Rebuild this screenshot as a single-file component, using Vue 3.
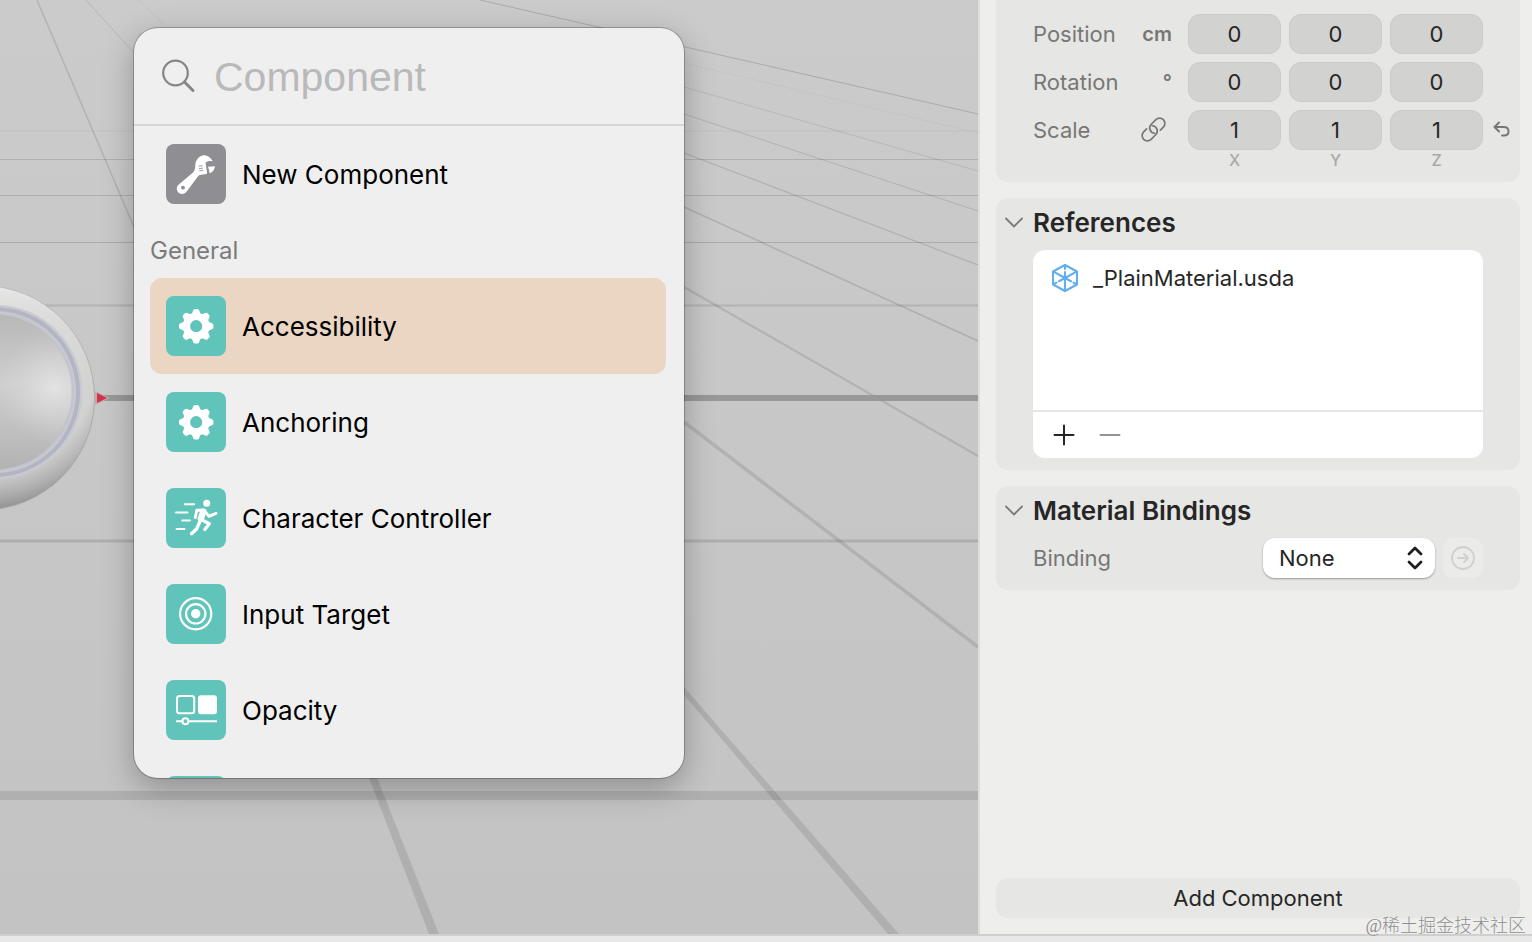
<script setup>
import { ref } from 'vue'

const query = ref('')
const selected = ref('Accessibility')
const binding = ref('None')

const general = [
  { name: 'Accessibility', icon: 'gear' },
  { name: 'Anchoring', icon: 'gear' },
  { name: 'Character Controller', icon: 'runner' },
  { name: 'Input Target', icon: 'target' },
  { name: 'Opacity', icon: 'opacity' },
]

const transform = ref([
  { label: 'Position', unit: 'cm', values: ['0', '0', '0'] },
  { label: 'Rotation', unit: '°', values: ['0', '0', '0'] },
  { label: 'Scale', unit: '', values: ['1', '1', '1'] },
])
const axes = ['X', 'Y', 'Z']

const teeth = [0, 45, 90, 135, 180, 225, 270, 315]

const depthLines = [
  { y: 131, w: 1, o: 0.05 },
  { y: 159.5, w: 1, o: 0.12 },
  { y: 195.5, w: 1, o: 0.13 },
  { y: 242.5, w: 1, o: 0.15 },
  { y: 305.5, w: 2, o: 0.1 },
  { y: 541, w: 3, o: 0.12 },
  { y: 795.5, w: 9, o: 0.1 },
]
const rays = [
  { d: 'M37 0L134 227', w: 1.5, o: 0.12 },
  { d: 'M86 0L134 53', w: 1, o: 0.1 },
  { d: 'M138 0L166 26', w: 1, o: 0.04 },
  { d: 'M480 0L978 114', w: 1, o: 0.16 },
  { d: 'M684 63L978 133', w: 1, o: 0.03 },
  { d: 'M684 87L978 171', w: 1, o: 0.09 },
  { d: 'M684 114L978 211', w: 1, o: 0.12 },
  { d: 'M684 153L978 265', w: 1.2, o: 0.13 },
  { d: 'M684 207L978 341', w: 1.6, o: 0.12 },
  { d: 'M684 287L978 456', w: 2.2, o: 0.11 },
  { d: 'M684 422L978 647', w: 3.5, o: 0.1 },
]
</script>

<template>
  <div class="app">
    <div class="workspace">
      <main class="viewport">
        <svg class="scene" viewBox="0 0 978 934" preserveAspectRatio="xMinYMin slice" aria-hidden="true">
          <defs>
            <linearGradient id="floor" x1="0" y1="0" x2="0" y2="1">
              <stop offset="0" stop-color="#cbcbcb" />
              <stop offset="1" stop-color="#c3c3c3" />
            </linearGradient>
            <radialGradient id="rim" gradientUnits="userSpaceOnUse" cx="-14" cy="360" r="160">
              <stop offset="0.5" stop-color="#d6d6d5" />
              <stop offset="0.7" stop-color="#d2d2d1" />
              <stop offset="0.84" stop-color="#b0b0b0" />
              <stop offset="1" stop-color="#7d7d7d" />
            </radialGradient>
            <linearGradient id="rimTop" x1="0" y1="0" x2="0" y2="1">
              <stop offset="0" stop-color="#e6e6e6" />
              <stop offset="0.2" stop-color="#dededd" stop-opacity="0.4" />
              <stop offset="0.45" stop-color="#dededd" stop-opacity="0" />
            </linearGradient>
            <linearGradient id="face" x1="0" y1="0" x2="0" y2="1">
              <stop offset="0" stop-color="#b6b7b6" />
              <stop offset="0.45" stop-color="#cfcfcf" />
              <stop offset="1" stop-color="#b2b2b2" />
            </linearGradient>
            <radialGradient id="glow" gradientUnits="userSpaceOnUse" cx="54" cy="388" r="56">
              <stop offset="0" stop-color="#e2e3e2" />
              <stop offset="1" stop-color="#d4d4d4" stop-opacity="0" />
            </radialGradient>
          </defs>
          <rect width="978" height="934" fill="url(#floor)" />
          <path
            v-for="line in depthLines"
            :key="line.y"
            :d="`M0 ${line.y}H978`"
            stroke="#000"
            :stroke-width="line.w"
            :stroke-opacity="line.o"
          />
          <path
            v-for="ray in rays"
            :key="ray.d"
            :d="ray.d"
            stroke="#000"
            :stroke-width="ray.w"
            :stroke-opacity="ray.o"
          />
          <path d="M366 770L429 934H439L374 770Z" fill="#000" fill-opacity="0.1" />
          <path d="M684 695L888 934H899L684 687Z" fill="#000" fill-opacity="0.1" />
          <path d="M104 398H978" stroke="#989898" stroke-width="6" />
          <circle cx="-17.5" cy="398" r="112" fill="url(#rim)" stroke="#a4a4a4" stroke-width="0.8" />
          <circle cx="-17.5" cy="398" r="112" fill="url(#rimTop)" />
          <circle cx="-4.5" cy="392" r="87" fill="#c9cad0" />
          <circle cx="-5" cy="392" r="83" fill="none" stroke="#b3b5c4" stroke-width="4" />
          <circle cx="-5.5" cy="392" r="78.5" fill="url(#face)" stroke="#c3c4cc" stroke-width="2" />
          <circle cx="-5.5" cy="392" r="77" fill="url(#glow)" />
          <path d="M95 391L110 398L95 405Z" fill="#c5a8aa" />
          <path d="M97 393L107 398L97 403Z" fill="#d4324a" />
        </svg>

        <section class="picker" aria-label="Add component">
          <label class="search">
            <svg class="search-icon" viewBox="0 0 34 34" aria-hidden="true">
              <circle cx="13.500" cy="14" r="12.300" fill="none" stroke="#868686" stroke-width="2.200" />
              <path d="M22.500 23L31 31.500" stroke="#868686" stroke-width="3" stroke-linecap="round" />
            </svg>
            <input v-model="query" type="text" placeholder="Component" aria-label="Search components" />
          </label>

          <div class="choices">
            <button class="choice" type="button">
              <svg class="tile gray" viewBox="0 0 60 60" aria-hidden="true">
                <path
                  d="M46.8 17.2C44.5 12.800 40.500 10.700 37.500 11.200C32.500 12 29.500 16.500 29.300 21C29.200 24.500 28.800 26.500 27 28.500L12.500 40.800C9.800 43.500 10.500 47.300 13 49C15.800 50.800 19 50 20.700 47.500L31.500 33C32.800 31.300 34.500 30.600 36.800 30.600C38.500 30.600 40 30.200 41.200 29.500L39.500 18.500Q42.500 16.500 46.800 17.200Z"
                  fill="#fff"
                />
                <path d="M42 22.800L49 22.300Q48.500 27 43.800 29.500Z" fill="#fff" />
                <path d="M40.600 19.500L42.800 30" stroke="#8e8e93" stroke-width="1" />
                <path d="M32.800 22.300L36.500 21.600M33 24.700L37 24M33.200 27L37.200 26.300" stroke="#8e8e93" stroke-width="0.9" />
                <circle cx="17" cy="43.700" r="1.900" fill="#8e8e93" />
              </svg>
              <span>New Component</span>
            </button>

            <h2 class="group">General</h2>

            <button
              v-for="item in general"
              :key="item.name"
              class="choice"
              :class="{ active: item.name === selected }"
              type="button"
              @click="selected = item.name"
            >
              <svg class="tile teal" viewBox="0 0 60 60" aria-hidden="true">
                <g v-if="item.icon === 'gear'" fill="#fff">
                  <path
                    v-for="angle in teeth"
                    :key="angle"
                    d="M25.200 19.500L27.200 14.500Q27.700 13 29 13H31.400Q32.700 13 33.200 14.500L35.200 19.500Z"
                    :transform="`rotate(${angle} 30.200 30.200)`"
                  />
                  <circle cx="30.200" cy="30.200" r="9.800" fill="none" stroke="#fff" stroke-width="7.400" />
                </g>
                <g v-else-if="item.icon === 'runner'" fill="none" stroke="#fff" stroke-linecap="round" stroke-linejoin="round">
                  <circle cx="40.700" cy="15.300" r="3.500" fill="#fff" stroke="none" />
                  <path d="M18.800 16.300H28.200M10 24.500H21.500M16.300 32.500H24M10.500 41H18.500" stroke-width="1.900" />
                  <path d="M29.300 29.500L30.800 22.200L37 22.300M40 24.800L43 28.300L50 25.300" stroke-width="2.900" />
                  <path d="M37.300 23.500L34.800 30.800" stroke-width="6.400" />
                  <path d="M35.300 31.500L43.300 35.800L38.800 41.500M33.500 34.500L30.500 41L25.500 45.700" stroke-width="3.300" />
                </g>
                <g v-else-if="item.icon === 'target'" fill="none" stroke="#fff" stroke-width="2.200">
                  <circle cx="29.700" cy="29.800" r="15.600" />
                  <circle cx="29.700" cy="29.800" r="9.700" />
                  <circle cx="29.700" cy="29.800" r="4.700" fill="#fff" stroke="none" />
                </g>
                <g v-else fill="none" stroke="#fff" stroke-width="2">
                  <rect x="11" y="16" width="17.200" height="17.200" rx="2.500" />
                  <rect x="32" y="15.200" width="19" height="19" rx="3" fill="#fff" stroke="none" />
                  <path d="M10.800 41.200H16.400M22.400 41.200H50.200" stroke-linecap="round" />
                  <circle cx="19.400" cy="41.200" r="3" />
                </g>
              </svg>
              <span>{{ item.name }}</span>
            </button>
            <button class="choice" type="button" aria-label="More components">
              <svg class="tile teal" viewBox="0 0 60 60" aria-hidden="true" />
            </button>
          </div>
        </section>
      </main>

      <aside class="inspector">
        <section class="card transform" aria-label="Transform">
          <div v-for="row in transform" :key="row.label" class="vector">
            <span class="label">{{ row.label }}</span>
            <span v-if="row.unit" class="unit">{{ row.unit }}</span>
            <button v-else class="plain unit" type="button" aria-label="Link scale axes">
              <svg width="32" height="28" viewBox="0 0 32 28" fill="none" stroke="#777775" stroke-width="1.700" stroke-linecap="round" aria-hidden="true">
                <g transform="translate(13.5 13.5) rotate(-45)">
                  <path d="M4.500 5.250H8.650A5.250 5.250 0 0 0 8.650 -5.250H2.150A5.250 5.250 0 0 0 -1.800 3.500" />
                  <path d="M-4.500 -5.250H-8.650A5.250 5.250 0 0 0 -8.650 5.250H-2.150A5.250 5.250 0 0 0 1.800 -3.500" />
                </g>
              </svg>
            </button>
            <input
              v-for="(axis, i) in axes"
              :key="axis"
              v-model="row.values[i]"
              class="field"
              type="text"
              :aria-label="`${row.label} ${axis}`"
            />
            <button v-if="row.label === 'Scale'" class="plain" type="button" aria-label="Reset scale">
              <svg width="22" height="24" viewBox="0 0 22 24" fill="none" stroke="#777775" stroke-width="2" stroke-linecap="round" stroke-linejoin="round" aria-hidden="true">
                <path d="M8 4.500L3.500 9L8 13.500M4 9H12.500C15.500 9 17.500 10.600 17.500 13.200C17.500 15.900 15.500 17.500 13 17.500H11" />
              </svg>
            </button>
          </div>
          <div class="vector axes">
            <span v-for="axis in axes" :key="axis" class="axis">{{ axis }}</span>
          </div>
        </section>

        <section class="card">
          <h2 class="head">
            <svg width="18" height="12" viewBox="0 0 18 12" fill="none" stroke="#7b7b79" stroke-width="1.800" stroke-linecap="round" stroke-linejoin="round" aria-hidden="true">
              <path d="M1 1.500L9 9.500L17 1.500" />
            </svg>
            References
          </h2>
          <div class="refs">
            <ul>
              <li>
                <svg width="28" height="30" viewBox="0 0 28 30" fill="none" stroke="#62aeee" stroke-width="2.100" stroke-linejoin="round" stroke-linecap="round" aria-hidden="true">
                  <path d="M14 2L26 8.500V21.500L14 28L2 21.500V8.500Z" />
                  <path d="M2.500 8.700L14 15L25.500 8.700M14 15V28" />
                  <path d="M14 3V6M14 9V14M3 21L5.500 19.600M8 18.200L14 15L20 18.200M22.500 19.600L25 21" />
                </svg>
                <span>_PlainMaterial.usda</span>
              </li>
            </ul>
            <div class="tools">
              <button class="plain" type="button" aria-label="Add reference">
                <svg width="22" height="22" viewBox="0 0 22 22" stroke="#262626" stroke-width="2" stroke-linecap="round" aria-hidden="true">
                  <path d="M1.500 11H20.500M11 1.500V20.500" />
                </svg>
              </button>
              <button class="plain" type="button" aria-label="Remove reference">
                <svg width="22" height="22" viewBox="0 0 22 22" stroke="#949494" stroke-width="2" stroke-linecap="round" aria-hidden="true">
                  <path d="M1.500 11H20.500" />
                </svg>
              </button>
            </div>
          </div>
        </section>

        <section class="card">
          <h2 class="head">
            <svg width="18" height="12" viewBox="0 0 18 12" fill="none" stroke="#7b7b79" stroke-width="1.800" stroke-linecap="round" stroke-linejoin="round" aria-hidden="true">
              <path d="M1 1.500L9 9.500L17 1.500" />
            </svg>
            Material Bindings
          </h2>
          <div class="binding">
            <label class="label" for="binding">Binding</label>
            <div class="select">
              <select id="binding" v-model="binding">
                <option>None</option>
              </select>
              <svg width="16" height="24" viewBox="0 0 16 24" fill="none" stroke="#1f1f1f" stroke-width="2.800" stroke-linecap="round" stroke-linejoin="round" aria-hidden="true">
                <path d="M2 8L8 2L14 8M2 16L8 22L14 16" />
              </svg>
            </div>
            <button class="go" type="button" disabled aria-label="Go to material">
              <svg width="24" height="24" viewBox="0 0 24 24" fill="none" stroke="#d0d0ce" stroke-width="1.800" stroke-linecap="round" stroke-linejoin="round" aria-hidden="true">
                <circle cx="12" cy="12" r="11" />
                <path d="M7 12H17M13 8L17 12L13 16" />
              </svg>
            </button>
          </div>
        </section>

        <button class="add" type="button">Add Component</button>
      </aside>
    </div>
    <footer class="strip"></footer>
    <span class="watermark">@稀土掘金技术社区</span>
  </div>
</template>

<style>
body {
  margin: 0;
}
</style>

<style scoped>
.app {
  position: relative;
  display: flex;
  flex-direction: column;
  height: 100vh;
  overflow: hidden;
  background: #eeeeec;
  color: #262626;
  font-family: Inter, "Liberation Sans", "Noto Sans CJK SC", sans-serif;
  font-size: 22px;
}
.app * {
  box-sizing: border-box;
}
button,
input,
select {
  margin: 0;
  padding: 0;
  border: 0;
  background: none;
  color: inherit;
  font: inherit;
}
h2,
ul {
  margin: 0;
  padding: 0;
  list-style: none;
}
svg {
  display: block;
  flex: none;
}
.workspace {
  display: flex;
  flex: 1;
  min-height: 0;
}
.viewport {
  position: relative;
  flex: 1;
  min-width: 0;
  overflow: hidden;
  background: #c6c6c6;
}
.scene {
  width: 100%;
  height: 100%;
}
.picker {
  position: absolute;
  top: 28px;
  left: 134px;
  display: flex;
  flex-direction: column;
  width: 550px;
  height: 750px;
  overflow: hidden;
  border-radius: 24px;
  background: #efefef;
  box-shadow: 0 0 0 1px rgba(0, 0, 0, 0.24), 0 10px 32px rgba(0, 0, 0, 0.28);
}
.search {
  display: flex;
  flex: none;
  align-items: center;
  gap: 18px;
  height: 98px;
  padding: 0 28px;
  border-bottom: 2px solid #d6d6d6;
}
.search-icon {
  width: 34px;
  height: 34px;
}
.search input {
  flex: 1;
  min-width: 0;
  padding-top: 3px;
  outline: none;
  font-family: "Liberation Sans", sans-serif;
  font-size: 41px;
}
.search input::placeholder {
  color: #b9b9b9;
  opacity: 1;
}
.choices {
  flex: 1;
  min-height: 0;
  overflow: hidden;
  padding: 0 18px 0 16px;
}
.choice {
  display: flex;
  align-items: center;
  gap: 16px;
  width: 100%;
  height: 96px;
  padding: 0 16px;
  border-radius: 12px;
  color: #000;
  font-size: 26px;
  text-align: left;
}
.choice.active {
  background: #ebd6c3;
}
.tile {
  width: 60px;
  height: 60px;
  border-radius: 8px;
}
.gray {
  background: #8e8e93;
}
.teal {
  background: #61c4bb;
}
.group {
  height: 56px;
  color: #7b7b7b;
  font-size: 24px;
  font-weight: 400;
  line-height: 58px;
}
.inspector {
  display: flex;
  flex: none;
  flex-direction: column;
  gap: 16px;
  width: 554px;
  padding: 0 12px 16px 16px;
  border-left: 2px solid #dededd;
}
.card {
  padding: 0 0 12px 37px;
  border-radius: 12px;
  background: #e6e6e4;
}
.transform {
  display: flex;
  flex-direction: column;
  gap: 8px;
  padding-top: 14px;
  border-radius: 0 0 12px 12px;
}
.vector {
  display: grid;
  grid-template-columns: 99px 40px repeat(3, 1fr) 29px;
  gap: 8px;
  align-items: center;
}
.label {
  color: #777775;
}
.unit {
  padding-right: 8px;
  color: #777775;
  font-size: 20px;
  font-weight: 600;
  text-align: right;
}
.plain {
  display: flex;
  align-items: center;
}
.field {
  width: 100%;
  min-width: 0;
  height: 40px;
  border: 1px solid #cbcbc9;
  border-radius: 12px;
  background: #d2d2d0;
  text-align: center;
}
.axes {
  margin-top: -8px;
}
.axis {
  color: #a9a9a7;
  font-size: 16px;
  font-weight: 500;
  line-height: 20px;
  text-align: center;
}
.axis:first-child {
  grid-column: 3;
}
.head {
  display: flex;
  align-items: center;
  gap: 10px;
  height: 52px;
  margin-left: -28px;
  padding-bottom: 3px;
  font-size: 26px;
  font-weight: 600;
}
.refs {
  margin-right: 37px;
  overflow: hidden;
  border-radius: 12px;
  background: #fff;
}
.refs ul {
  height: 162px;
  padding: 8px 18px;
  border-bottom: 2px solid #e6e6e6;
}
.refs li {
  display: flex;
  align-items: center;
  gap: 14px;
  height: 40px;
}
.tools {
  display: flex;
  align-items: center;
  gap: 24px;
  height: 46px;
  padding: 0 20px;
}
.binding {
  display: flex;
  align-items: center;
  gap: 8px;
  margin-right: 37px;
}
.binding .label {
  flex: 1;
}
.select {
  position: relative;
  width: 172px;
}
.select select {
  width: 100%;
  height: 40px;
  padding: 0 40px 0 16px;
  border-radius: 12px;
  appearance: none;
  background: #fff;
  box-shadow: 0 1px 2px rgba(0, 0, 0, 0.35);
}
.select svg {
  position: absolute;
  top: 8px;
  right: 12px;
  pointer-events: none;
}
.go {
  display: flex;
  align-items: center;
  justify-content: center;
  width: 40px;
  height: 40px;
  border-radius: 10px;
  background: #ebebe9;
}
.add {
  height: 40px;
  margin-top: auto;
  border-radius: 12px;
  background: #e6e6e4;
}
.strip {
  flex: none;
  height: 8px;
  border-top: 2px solid #cfcfcf;
  background: #e8e8e8;
}
.watermark {
  position: absolute;
  right: 6px;
  bottom: 4px;
  color: #8c8c8c;
  font-family: "Liberation Serif", "Noto Sans CJK SC", serif;
  font-size: 18px;
  font-weight: 300;
  line-height: 24px;
  text-shadow: 0 0 1px #fff;
}
</style>
